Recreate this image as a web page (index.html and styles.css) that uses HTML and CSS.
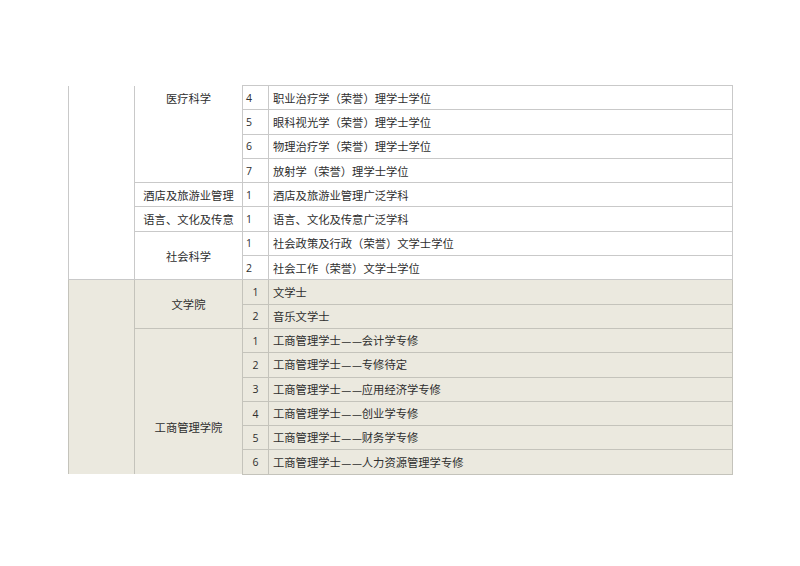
FILE: index.html
```html
<!DOCTYPE html>
<html lang="zh-Hans">
<head>
<meta charset="utf-8">
<title>课程列表</title>
<link rel="stylesheet" href="styles.css">
</head>
<body>
<table class="majors">
  <colgroup>
    <col class="c-fac"><col class="c-dept"><col class="c-no"><col class="c-name">
  </colgroup>
  <tbody class="sec-white">
    <tr>
      <td class="fac open-top" rowspan="8"></td>
      <td class="dept open-top dept-top" rowspan="4">医疗科学</td>
      <td class="no">4</td><td class="name">职业治疗学（荣誉）理学士学位</td>
    </tr>
    <tr><td class="no">5</td><td class="name">眼科视光学（荣誉）理学士学位</td></tr>
    <tr><td class="no">6</td><td class="name">物理治疗学（荣誉）理学士学位</td></tr>
    <tr><td class="no">7</td><td class="name">放射学（荣誉）理学士学位</td></tr>
    <tr>
      <td class="dept">酒店及旅游业管理</td>
      <td class="no">1</td><td class="name">酒店及旅游业管理广泛学科</td>
    </tr>
    <tr>
      <td class="dept">语言、文化及传意</td>
      <td class="no">1</td><td class="name">语言、文化及传意广泛学科</td>
    </tr>
    <tr>
      <td class="dept" rowspan="2">社会科学</td>
      <td class="no">1</td><td class="name">社会政策及行政（荣誉）文学士学位</td>
    </tr>
    <tr><td class="no">2</td><td class="name">社会工作（荣誉）文学士学位</td></tr>
  </tbody>
  <tbody class="sec-beige">
    <tr>
      <td class="fac open-bottom" rowspan="8"></td>
      <td class="dept" rowspan="2">文学院</td>
      <td class="no">1</td><td class="name">文学士</td>
    </tr>
    <tr><td class="no">2</td><td class="name">音乐文学士</td></tr>
    <tr>
      <td class="dept open-bottom dept-low" rowspan="6">工商管理学院</td>
      <td class="no">1</td><td class="name">工商管理学士<span class="dash">——</span>会计学专修</td>
    </tr>
    <tr><td class="no">2</td><td class="name">工商管理学士<span class="dash">——</span>专修待定</td></tr>
    <tr><td class="no">3</td><td class="name">工商管理学士<span class="dash">——</span>应用经济学专修</td></tr>
    <tr><td class="no">4</td><td class="name">工商管理学士<span class="dash">——</span>创业学专修</td></tr>
    <tr><td class="no">5</td><td class="name">工商管理学士<span class="dash">——</span>财务学专修</td></tr>
    <tr><td class="no">6</td><td class="name">工商管理学士<span class="dash">——</span>人力资源管理学专修</td></tr>
  </tbody>
</table>
</body>
</html>
```

FILE: styles.css
```css
html, body {
  margin: 0;
  padding: 0;
  background: #ffffff;
}

body {
  font-family: "Noto Sans CJK SC", "Noto Sans", sans-serif;
  color: #2e2e2e;
  font-size: 11.3px;
}

.majors {
  border-collapse: collapse;
  table-layout: fixed;
  width: 664px;
  margin: 85px 0 0 68px;
}

.c-fac { width: 66px; }
.c-dept { width: 108px; }
.c-no { width: 26px; }
.c-name { width: 464px; }

.majors td {
  border: 1px solid #c9c9c9;
  height: 23.3px;
  padding: 0;
  line-height: 14px;
  vertical-align: middle;
  white-space: nowrap;
  overflow: hidden;
}

.sec-beige td {
  background: #ebe9df;
  border-color: #c4c3bb;
}

.majors td.open-top { border-top: none; }
.majors td.open-bottom { border-bottom: none; }

.dept {
  text-align: center;
}

.majors td.dept-top {
  vertical-align: top;
  padding-top: 5px;
}

.majors td.dept-low {
  vertical-align: top;
  padding-top: 91px;
}

.no {
  font-family: "Open Sans", "Noto Sans", sans-serif;
  font-size: 10.5px;
  padding-left: 3px !important;
}

.sec-beige .no {
  text-align: center;
  padding-left: 0 !important;
}

.name {
  padding-left: 4px !important;
}

.dash {
  display: inline-block;
  width: 20px;
  font-family: "Liberation Sans", sans-serif;
  letter-spacing: 2px;
  transform: scaleX(0.8);
  transform-origin: left center;
  padding-left: 1px;
}
```
